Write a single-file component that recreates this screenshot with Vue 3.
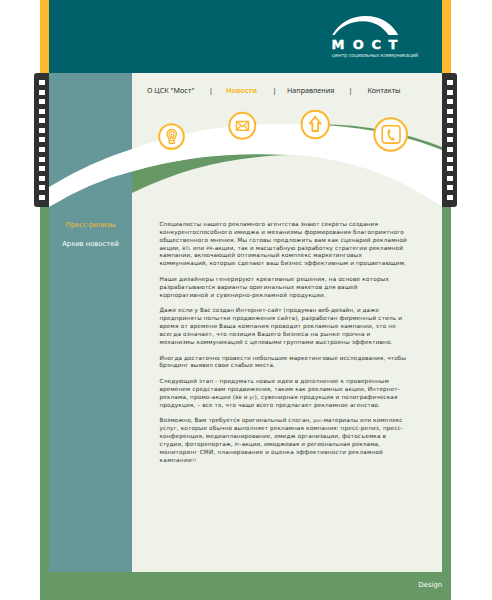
<script setup>
import { ref, onMounted } from 'vue'

const nav = [
  { label: 'О ЦСК "Мост"' },
  { label: 'Новости', active: true },
  { label: 'Направления' },
  { label: 'Контакты' },
]

// Every line carries its set width in pixels; tracking is derived from it.
const paragraphs = [
  [
    ['Специалисты нашего рекламного агентства знают секреты создания', 218.5],
    ['конкурентоспособного имиджа и механизмы формирования благоприятного', 244.5],
    ['общественного мнения. Мы готовы предложить вам как сценарий рекламной', 247.5],
    ['акции, |BTL| или |PR|-акции, так и масштабную разработку стратегии рекламной', 243.5],
    ['кампании, включающей оптимальный комплекс маркетинговых', 202.5],
    ['коммуникаций, которые сделают ваш бизнес эффективным и процветающим.', 246.5],
  ],
  [
    ['Наши дизайнеры генерируют креативные решения, на основе которых', 229.5],
    ['разрабатываются варианты оригинальных макетов для вашей', 198],
    ['корпоративной и сувенирно-рекламной продукции.', 166.5],
  ],
  [
    ['Даже если у Вас создан Интернет-сайт (продуман веб-дизайн, и даже', 219.5],
    ['предприняты попытки продвижения сайта), разработан фирменный стиль и', 242.5],
    ['время от времени Ваша компания проводит рекламные кампании, это не', 236.5],
    ['всегда означает, что позиция Вашего бизнеса на рынке прочна и', 211],
    ['механизмы коммуникаций с целевыми группами выстроены эффективно.', 233],
  ],
  [
    ['Иногда достаточно провести небольшие маркетинговые исследования, чтобы', 246.5],
    ['брэндинг выявил свои слабые места.', 115.5],
  ],
  [
    ['Следующий этап - придумать новые идеи в дополнение к проверенным', 229.5],
    ['временем средствам продвижения, таким как рекламные акции, Интернет-', 240.5],
    ['реклама, промо-акции (|BB| и |pr|), сувенирная продукция и полиграфическая', 238],
    ['продукция, – все то, что чаще всего предлагает рекламное агенство.', 220.5],
  ],
  [
    ['Возможно, Вам требуется оригинальный слоган, |рос|-материалы или комплекс', 243],
    ['услуг, которые обычно выполняет рекламная компания: пресс-релиз, пресс-', 243.5],
    ['конференция, медиапланирование, имидж организации, фотосъемка в', 226.5],
    ['студии, фоторепортаж, |Pr|-акции, имиджевая и региональная реклама,', 220.5],
    ['мониторинг СМИ, планирование и оценка эффективности рекламной', 223.5],
    ['кампании|!!|', 37],
  ],
]

const article = ref(null)
onMounted(() => {
  for (const el of article.value.querySelectorAll('.line')) {
    const count = el.textContent.length
    const gap = Number(el.dataset.width) - el.getBoundingClientRect().width
    el.style.letterSpacing = `${(gap / count).toFixed(4)}px`
  }
})
</script>

<template>
  <div class="page">
    <header class="header">
      <svg class="logo" viewBox="0 0 92 48" width="92" height="48">
        <path d="M2.2 21C10 8 22 2 35.500 2C50 2 62 9 68.200 21H58.500C53 13 44 7.300 33 7.300C21 7.300 11 12 4.500 21Z" fill="#fff" />
        <text y="35.200" class="brand"><tspan x="1.500">М</tspan><tspan x="22.800">О</tspan><tspan x="41.500">С</tspan><tspan x="58.600">Т</tspan></text>
        <text x="1.800" y="43.100" class="tagline" textLength="86.500">центр социальных коммуникаций</text>
      </svg>
    </header>

    <div class="body">
      <aside class="sidebar">
        <a class="side-link current">Пресс-релизы</a>
        <a class="side-link">Архив новостей</a>
      </aside>
      <main class="main">
        <nav class="nav">
          <template v-for="(item, i) in nav" :key="item.label">
            <span v-if="i" class="divider">|</span>
            <a :class="['nav-link', { active: item.active }]">{{ item.label }}</a>
          </template>
        </nav>
        <article ref="article" class="article">
          <p v-for="(lines, p) in paragraphs" :key="p">
            <span v-for="([text, width], l) in lines" :key="l" class="row"><span class="line" :data-width="width"><span v-for="(part, k) in text.split('|')" :key="k" :class="{ tiny: k % 2 }">{{ part }}</span></span></span>
          </p>
        </article>
      </main>

      <svg class="bridge" viewBox="49 73 393 140" width="393" height="140">
        <path d="M132 171.5C180 157.5 230 152 290 155C235 156.500 185 167 132 193Z" fill="#669966" />
        <path d="M49 187Q90 162 132 149C185 130 235 123.800 283 123.800C345 123.800 400 134 442 150V207C396 174 340 155 276 154.300C225 152.500 180 157.500 132 171.500Q90 182 49 207Z" fill="#fff" />
        <path d="M315 124.200C360 123.500 405 132 442 147V150C405 135 365 127 315 124.800Z" fill="#669966" />
        <g fill="#fff" stroke="#fdb52c" stroke-width="2">
          <circle cx="171.500" cy="136.500" r="12.300" />
          <circle cx="242.300" cy="125.800" r="13" />
          <circle cx="315.200" cy="124.500" r="13.700" />
          <circle cx="390.700" cy="134.500" r="16.300" />
        </g>
        <g fill="none" stroke="#fdb52c" stroke-width="1.400" stroke-linejoin="round" stroke-linecap="round">
          <path d="M169.300 141C169.300 138 167 136.500 167 133.700A4.700 4.200 0 0 1 176.400 133.700C176.400 136.500 174.100 138 174.100 141V143.300H169.300Z" />
          <path d="M170.500 138.500L169.200 134A2.500 2.500 0 0 1 174.200 134L172.900 138.500M171.700 133.800V138M169.600 140.300H173.800" stroke-width="1.200" />
          <rect x="236.500" y="121.500" width="12" height="8.800" stroke-width="1.600" />
          <path d="M237.300 122L242.500 126.700L247.700 122M237.300 129.700L240.700 125.700M247.700 129.700L244.300 125.700" stroke-width="1.300" />
          <path d="M315.200 116.700L320.500 123.400H318V131H312.400V123.400H309.900Z" stroke-width="1.800" stroke-linejoin="miter" />
          <rect x="382.200" y="125.800" width="17.800" height="17.300" rx="3" stroke-width="1.600" />
        </g>
        <path d="M388.300 129.300L390.200 129.500L390.400 132.800L389.300 133.500C389.500 135.500 390.400 137 391.700 138.200L393 137.500L394.900 139L393.700 140.500C389 140.700 386.200 134 388.300 129.300Z" fill="#fdb52c" />
      </svg>

      <div v-for="side in ['left', 'right']" :key="side" :class="['film', side]">
        <i v-for="n in 13" :key="n" />
      </div>
    </div>

    <footer class="footer">Design</footer>
  </div>
</template>

<style>
body { background: #fff; }
</style>

<style scoped>
.page {
  width: 411px;
  height: 600px;
  margin-left: 40px;
  display: flex;
  flex-direction: column;
  background: #669966;
  font-family: "DejaVu Sans", sans-serif;
  color: #222;
}
.header {
  box-sizing: border-box;
  height: 73px;
  border: solid #fdb930;
  border-width: 0 9px;
  background: #00616a;
  display: flex;
  justify-content: flex-end;
  padding: 14px 20px 0 0;
}
.logo { display: block; }
.brand {
  font: 700 13px "DejaVu Sans", sans-serif;
  fill: #fff;
  stroke: #fff;
  stroke-width: 0.4px;
}
.tagline { font: 5.3px "DejaVu Sans", sans-serif; fill: #d3e5e5; }
.body {
  position: relative;
  height: 499px;
  margin: 0 9px;
  display: grid;
  grid-template-columns: 83px 310px;
}
.sidebar {
  background: #669899;
  display: flex;
  flex-direction: column;
  align-items: center;
  gap: 9px;
  padding-top: 147px;
}
.side-link {
  font: 6.8px/10px "DejaVu Sans", sans-serif;
  color: #fff;
}
.side-link.current { color: #fdb930; }
.main { background: #eff2e9; }
.nav {
  height: 10px;
  padding: 12px 0 0 15px;
  display: grid;
  grid-template-columns: 62px 17px 46.500px 14.500px 61.500px 19px 40px;
  font: 7.2px/10px "Noto Sans", sans-serif;
  color: #2d302c;
  white-space: nowrap;
}
.nav-link.active { font-weight: 700; color: #fdb52c; }
.article {
  margin: 126px 0 0 27.500px;
  font-size: 5.7px;
  line-height: 7.870px;
  color: #30342f;
}
.article p { margin: 0 0 7.870px; }
.row { display: block; height: 7.870px; white-space: nowrap; }
.line { display: inline-block; }
.tiny { font-size: 4.500px; }
.bridge { position: absolute; left: 0; top: 0; }
.film {
  position: absolute;
  top: 0;
  box-sizing: border-box;
  width: 15px;
  height: 134px;
  padding: 7px 0 7px;
  background: #303030;
  display: flex;
  flex-direction: column;
  justify-content: space-between;
  align-items: center;
}
.film i { width: 6px; height: 5px; background: #fff; }
.film.left { left: -15px; border-radius: 3px 0 0 3px; }
.film.right { right: -15px; border-radius: 0 3px 3px 0; }
.footer {
  height: 28px;
  padding-right: 9px;
  text-align: right;
  font: 6.800px/27px "DejaVu Sans", sans-serif;
  color: #fff;
}
</style>
